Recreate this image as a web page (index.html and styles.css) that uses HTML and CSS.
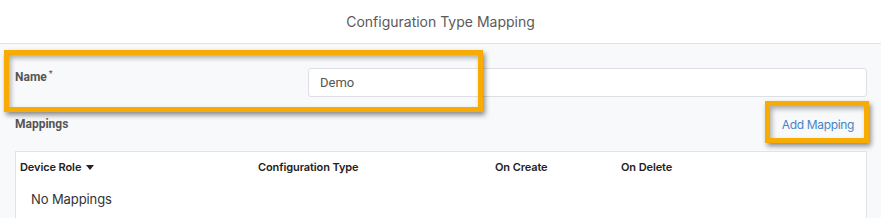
FILE: index.html
```html
<!DOCTYPE html>
<html>
<head>
<meta charset="utf-8">
<link rel="stylesheet" href="styles.css">
</head>
<body>
<div class="page">
  <header class="header">Configuration Type Mapping</header>
  <main class="content">
    <div class="field-row">
      <label class="field-label">Name<sup class="req">*</sup></label>
      <div class="input">Demo</div>
    </div>
    <div class="section-row">
      <span class="section-label">Mappings</span>
      <a class="add-link">Add Mapping</a>
    </div>
    <div class="table">
      <div class="thead">
        <div class="th col-role">Device Role <span class="caret"></span></div>
        <div class="th col-type">Configuration Type</div>
        <div class="th col-create">On Create</div>
        <div class="th col-delete">On Delete</div>
      </div>
      <div class="empty">No Mappings</div>
    </div>
  </main>
  <div class="highlight hl-name"></div>
  <div class="highlight hl-add"></div>
</div>
</body>
</html>
```
FILE: styles.css
```css
html, body {
  margin: 0;
  padding: 0;
}
body {
  width: 881px;
  height: 218px;
  overflow: hidden;
  background: #f8f9fb;
  font-family: Inter, "Liberation Sans", sans-serif;
}
.page {
  position: relative;
  height: 218px;
  overflow: hidden;
}
.header {
  height: 43px;
  background: #fff;
  border-bottom: 1px solid #e1e3e6;
  display: flex;
  align-items: center;
  justify-content: center;
  font-size: 14px;
  color: #5a5a5a;
}
.content {
  padding: 0 14px 0 15px;
}
.field-row {
  display: flex;
  align-items: flex-start;
  padding-top: 24px;
  height: 29px;
}
.field-label {
  font-family: Roboto, "Liberation Sans", sans-serif;
  font-weight: 700;
  font-size: 12px;
  color: #555;
  width: 293px;
  line-height: 14px;
  padding-top: 2px;
}
.req {
  font-size: 9px;
  font-weight: 400;
  vertical-align: top;
  position: relative;
  top: -3px;
  margin-left: 2px;
}
.input {
  flex: 1;
  height: 27px;
  background: #fff;
  border: 1px solid #dedfe2;
  border-radius: 3px;
  display: flex;
  align-items: center;
  padding-left: 11px;
  font-family: Roboto, "Liberation Sans", sans-serif;
  font-size: 13px;
  color: #555;
}
.section-row {
  display: flex;
  justify-content: space-between;
  align-items: center;
  margin-top: 18px;
  height: 18px;
  padding-right: 13px;
}
.section-label {
  font-family: Roboto, "Liberation Sans", sans-serif;
  font-weight: 700;
  font-size: 12px;
  color: #555;
}
.add-link {
  font-size: 12px;
  letter-spacing: -0.35px;
  color: #4884c4;
}
.table {
  margin-top: 18px;
  background: #fff;
  border: 1px solid #e1e3e6;
  border-bottom: none;
  height: 67px;
}
.thead {
  display: flex;
  padding: 8px 0 0 4px;
  height: 14px;
}
.th {
  font-size: 11px;
  font-weight: 600;
  letter-spacing: -0.1px;
  color: #222;
  display: flex;
  align-items: center;
}
.col-role { width: 238px; }
.col-type { width: 237px; }
.col-create { width: 126px; }
.caret {
  display: inline-block;
  width: 0;
  height: 0;
  border-left: 4px solid transparent;
  border-right: 4px solid transparent;
  border-top: 5px solid #222;
  margin-left: 5px;
}
.empty {
  padding: 17px 0 0 15px;
  font-size: 13px;
  letter-spacing: -0.1px;
  color: #333;
}
.highlight {
  position: absolute;
  border: 5px solid #f8ab02;
  box-shadow: 2px 3px 5px rgba(0, 0, 0, 0.45), inset 2px 3px 5px rgba(0, 0, 0, 0.3);
}
.hl-name {
  left: 4px;
  top: 50px;
  width: 469px;
  height: 52px;
}
.hl-add {
  left: 765px;
  top: 101px;
  width: 94px;
  height: 32px;
}
```
